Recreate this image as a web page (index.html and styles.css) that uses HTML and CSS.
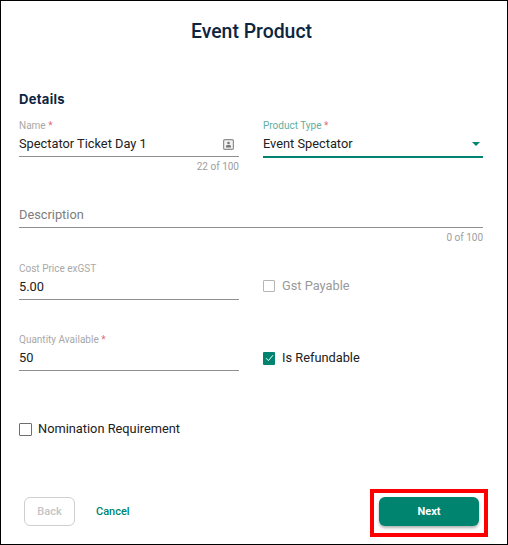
FILE: index.html
```html
<!DOCTYPE html>
<html lang="en">
<head>
    <meta charset="UTF-8">
    <meta name="viewport" content="width=device-width, initial-scale=1.0">
    <title>Event Product</title>
    <link rel="stylesheet" href="styles.css">
</head>
<body>

    <div class="frame">
        <h1 class="page-title">Event Product</h1>

        <!-- Form -->
        <div class="form">
            <h2 class="section-title">Details</h2>

            <div class="row row-first">
                <div class="field">
                    <label class="field-label">Name <span class="required">*</span></label>
                    <div class="field-value">
                        <span>Spectator Ticket Day 1</span>
                        <svg class="contact-icon" width="11" height="11" viewBox="0 0 11 11">
                            <rect x="0.6" y="0.6" width="9.8" height="9.8" rx="1.2" fill="#f1f1f1" stroke="#8f8f8f" stroke-width="1.2"/>
                            <circle cx="5.5" cy="4" r="1.3" fill="#777"/>
                            <path d="M3 8.4V7.4C3 6.5 4 6 5.5 6S8 6.5 8 7.4V8.4Z" fill="#777"/>
                        </svg>
                    </div>
                    <div class="field-count">22 of 100</div>
                </div>
                <div class="field">
                    <label class="field-label field-label-active">Product Type <span class="required">*</span></label>
                    <div class="field-value field-value-active">
                        <span>Event Spectator</span>
                        <span class="select-arrow"></span>
                    </div>
                </div>
            </div>

            <div class="field field-description">
                <div class="field-value field-placeholder">Description</div>
                <div class="field-count">0 of 100</div>
            </div>

            <div class="row row-cost">
                <div class="field">
                    <label class="field-label">Cost Price exGST</label>
                    <div class="field-value">5.00</div>
                </div>
                <div class="check check-disabled">
                    <span class="check-box"></span>
                    <span>Gst Payable</span>
                </div>
            </div>

            <div class="row row-quantity">
                <div class="field">
                    <label class="field-label">Quantity Available <span class="required">*</span></label>
                    <div class="field-value">50</div>
                </div>
                <div class="check check-refundable">
                    <span class="check-box check-box-on">
                        <svg width="9" height="8" viewBox="0 0 9 8">
                            <path d="M1 4.2L3.4 6.6L8 1.2" fill="none" stroke="#fff" stroke-width="1"/>
                        </svg>
                    </span>
                    <span>Is Refundable</span>
                </div>
            </div>

            <div class="check check-nomination">
                <span class="check-box"></span>
                <span>Nomination Requirement</span>
            </div>
        </div>

        <!-- Footer buttons -->
        <div class="footer">
            <button class="back-btn">Back</button>
            <button class="cancel-btn">Cancel</button>
            <div class="highlight">
                <button class="next-btn">Next</button>
            </div>
        </div>
    </div>

</body>
</html>
```

FILE: styles.css
```css
/* Reset default styles */
* {
    margin: 0;
    padding: 0;
    box-sizing: border-box;
}

body {
    background-color: #fff;
    font-family: Roboto, Arial, sans-serif;
    color: #212121;
}

/* Outer frame */
.frame {
    width: 508px;
    height: 545px;
    border: 1px solid #000;
    display: flex;
    flex-direction: column;
}

.page-title {
    margin-top: 19px;
    padding-right: 5px;
    font-size: 19.4px;
    line-height: 24px;
    font-weight: 500;
    color: #0d2540;
    text-align: center;
}

.form {
    padding: 0 24px 0 18px;
}

.section-title {
    margin-top: 47px;
    font-family: Inter, Arial, sans-serif;
    font-size: 13px;
    line-height: 16px;
    font-weight: 700;
    letter-spacing: 0.3px;
    color: #0d2540;
}

/* Two column rows */
.row {
    display: grid;
    grid-template-columns: 220px 220px;
    column-gap: 24px;
    align-items: end;
}

.row-first {
    margin-top: 13px;
    align-items: start;
}

.row-cost {
    margin-top: 19px;
}

.row-quantity {
    margin-top: 34px;
}

/* Fields */
.field-label {
    display: block;
    margin-bottom: 1px;
    font-size: 10px;
    line-height: 12px;
    color: #a8a8a8;
}

.field-label-active {
    color: #5fae9e;
}

.required {
    color: #e0707c;
}

.field-value {
    display: flex;
    justify-content: space-between;
    align-items: center;
    padding: 2px 0 3px;
    border-bottom: 1px solid #8f8f8f;
    font-size: 12.8px;
    line-height: 18px;
}

.field-value-active {
    border-bottom: 2px solid #00846f;
}

.field-placeholder {
    padding: 3px 0;
    color: #7d7d7d;
}

.field-count {
    margin-top: 4px;
    font-size: 10px;
    line-height: 12px;
    color: #9e9e9e;
    text-align: right;
}

.field-description {
    margin-top: 30px;
}

.contact-icon {
    margin-right: 5px;
}

.select-arrow {
    width: 0;
    height: 0;
    margin-right: 3px;
    border-left: 4.5px solid transparent;
    border-right: 4.5px solid transparent;
    border-top: 4.5px solid #00846f;
}

/* Checkboxes */
.check {
    display: flex;
    align-items: center;
    gap: 7px;
    padding: 2px 0 5px;
    font-size: 12.8px;
    line-height: 18px;
}

.check-disabled {
    color: #9a9a9a;
}

.check-refundable {
    padding: 3px 0 4px;
}

.check-nomination {
    margin-top: 47px;
    gap: 6px;
}

.check-box {
    width: 13px;
    height: 13px;
    border: 1.5px solid #6e6e6e;
    border-radius: 1px;
    display: flex;
    justify-content: center;
    align-items: center;
}

.check-disabled .check-box {
    width: 12px;
    height: 12px;
    border: 1px solid #b5b5b5;
}

.check-box-on {
    width: 12px;
    height: 13px;
    border: none;
    background-color: #00846f;
}

/* Footer */
.footer {
    margin-top: auto;
    padding: 0 19px 7px 23px;
    display: flex;
    align-items: flex-start;
}

.back-btn {
    width: 51px;
    height: 29px;
    margin-top: 8px;
    background-color: #fff;
    border: 1px solid #cfcfcf;
    border-radius: 6px;
    color: #c4c4c4;
    font-family: Roboto, Arial, sans-serif;
    font-size: 11px;
    font-weight: 500;
}

.cancel-btn {
    margin: 8px 0 0 21px;
    height: 29px;
    background: none;
    border: none;
    color: #00846f;
    font-family: Roboto, Arial, sans-serif;
    font-size: 11px;
    font-weight: 500;
}

.highlight {
    margin-left: auto;
    padding: 4px 5px 7px;
    border: 4px solid #f00;
}

.next-btn {
    display: block;
    width: 100px;
    height: 29px;
    background-color: #00846f;
    border: none;
    border-radius: 6px;
    box-shadow: 0 2px 3px rgba(0,0,0,0.3);
    color: #fff;
    font-family: Roboto, Arial, sans-serif;
    font-size: 11px;
    font-weight: 700;
}
```
